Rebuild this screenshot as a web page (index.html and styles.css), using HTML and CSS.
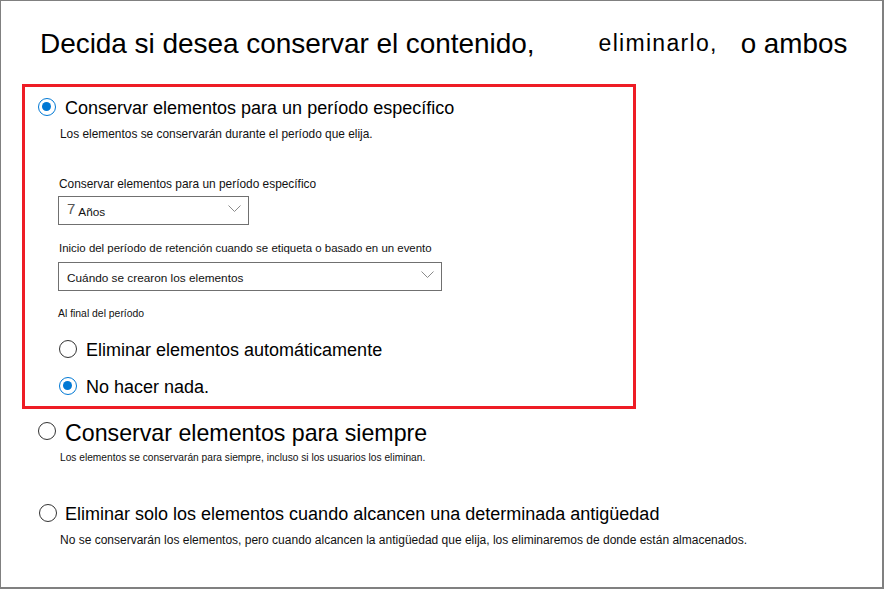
FILE: index.html
```html
<!DOCTYPE html>
<html lang="es">
<head>
<meta charset="utf-8">
<title>Retención</title>
<link rel="stylesheet" href="styles.css">
</head>
<body>
<div class="frame">
  <h1 class="title"><span class="t1">Decida si desea conservar el contenido,</span><span class="t2">eliminarlo,</span><span class="t3">o ambos</span></h1>

  <div class="redbox">
    <div class="row row1">
      <span class="radio on"></span>
      <span class="lbl l18">Conservar elementos para un período específico</span>
    </div>
    <p class="desc d1">Los elementos se conservarán durante el período que elija.</p>

    <p class="flabel f1">Conservar elementos para un período específico</p>
    <div class="select s1">
      <span class="num">7</span><span class="val">Años</span>
      <svg class="chev" width="13" height="7" viewBox="0 0 13 7"><path d="M0.5 0.5 L6.5 6.5 L12.5 0.5" fill="none" stroke="#8a8a8a" stroke-width="1"/></svg>
    </div>

    <p class="flabel f2">Inicio del período de retención cuando se etiqueta o basado en un evento</p>
    <div class="select s2">
      <span class="val">Cuándo se crearon los elementos</span>
      <svg class="chev" width="13" height="7" viewBox="0 0 13 7"><path d="M0.5 0.5 L6.5 6.5 L12.5 0.5" fill="none" stroke="#8a8a8a" stroke-width="1"/></svg>
    </div>

    <p class="flabel f3">Al final del período</p>
    <div class="row sub sub1">
      <span class="radio"></span>
      <span class="lbl l18">Eliminar elementos automáticamente</span>
    </div>
    <div class="row sub sub2">
      <span class="radio on"></span>
      <span class="lbl l18">No hacer nada.</span>
    </div>
  </div>

  <div class="row row2">
    <span class="radio"></span>
    <span class="lbl l23">Conservar elementos para siempre</span>
  </div>
  <p class="desc d2">Los elementos se conservarán para siempre, incluso si los usuarios los eliminan.</p>

  <div class="row row3">
    <span class="radio"></span>
    <span class="lbl l18">Eliminar solo los elementos cuando alcancen una determinada antigüedad</span>
  </div>
  <p class="desc d3">No se conservarán los elementos, pero cuando alcancen la antigüedad que elija, los eliminaremos de donde están almacenados.</p>
</div>
</body>
</html>
```

FILE: styles.css
```css
html, body {
  margin: 0;
  padding: 0;
  background: #ffffff;
}

body {
  font-family: "Liberation Sans", Arial, sans-serif;
  color: #000;
}

.frame {
  width: 884px;
  height: 589px;
  box-sizing: border-box;
  border-top: 1px solid #808080;
  border-left: 1px solid #808080;
  border-right: 2px solid #808080;
  border-bottom: 2px solid #808080;
  overflow: hidden;
}

.title {
  margin: 27px 0 0 39px;
  height: 32px;
  line-height: 32px;
  font-weight: normal;
  font-size: 28px;
  white-space: nowrap;
  display: flex;
  align-items: baseline;
}

.t1 {
  letter-spacing: -0.05px;
}

.t2 {
  margin-left: 64px;
  font-size: 23px;
  letter-spacing: 1.3px;
  position: relative;
  top: -2px;
}

.t3 {
  margin-left: 23px;
  font-size: 27.8px;
}

.redbox {
  margin: 24px 0 0 21px;
  width: 614px;
  height: 325px;
  box-sizing: border-box;
  border: 3px solid #ee1c25;
  padding: 9px 0 0 13px;
}

.row {
  display: flex;
  align-items: center;
  height: 22px;
}

.radio {
  width: 18px;
  height: 18px;
  box-sizing: border-box;
  border: 1px solid #333;
  border-radius: 50%;
  flex: none;
  position: relative;
  background: #fff;
}

.radio.on {
  border: 1.5px solid #0078d4;
}

.radio.on::after {
  content: "";
  position: absolute;
  left: 3px;
  top: 3px;
  width: 9px;
  height: 9px;
  border-radius: 50%;
  background: #0078d4;
}

.lbl {
  margin-left: 9px;
  white-space: nowrap;
  position: relative;
  top: 1px;
}

.l18 {
  font-size: 18px;
}

.l23 {
  font-size: 23.2px;
}

p {
  margin: 0;
}

.desc {
  white-space: nowrap;
  color: #111;
}

.d1 {
  margin: 9px 0 0 22px;
  font-size: 11.9px;
  line-height: 14px;
}

.flabel {
  font-size: 11.9px;
  line-height: 14px;
  color: #111;
  white-space: nowrap;
}

.f1 {
  margin: 36px 0 0 21px;
}

.select {
  margin-left: 20px;
  height: 29px;
  box-sizing: border-box;
  border: 1px solid #707070;
  display: flex;
  align-items: center;
  padding: 0 7px 0 8px;
  background: #fff;
}

.s1 {
  margin-top: 5px;
  width: 191px;
}

.s2 {
  margin-top: 7px;
  width: 384px;
}

.num {
  font-size: 15px;
  color: #555;
  margin-right: 3px;
  position: relative;
  top: -2px;
}

.val {
  font-size: 11.8px;
  color: #111;
  position: relative;
  top: 1px;
}

.chev {
  margin-left: auto;
  position: relative;
  top: -2px;
}

.f2 {
  margin: 16px 0 0 21px;
  font-size: 11.45px;
}

.f3 {
  margin: 16px 0 0 20px;
  font-size: 10.4px;
}

.sub {
  margin-left: 21px;
}

.sub1 {
  margin-top: 17px;
}

.sub2 {
  margin-top: 15px;
}

.row2 {
  margin: 10px 0 0 37px;
  height: 24px;
}

.row2 .lbl {
  top: 2px;
}

.d2 {
  margin: 9px 0 0 59px;
  font-size: 10.2px;
  line-height: 12px;
}

.row3 {
  margin: 38px 0 0 38px;
}

.row3 .lbl {
  margin-left: 8px;
}

.d3 {
  margin: 9px 0 0 59px;
  font-size: 12px;
  line-height: 14px;
}
```
